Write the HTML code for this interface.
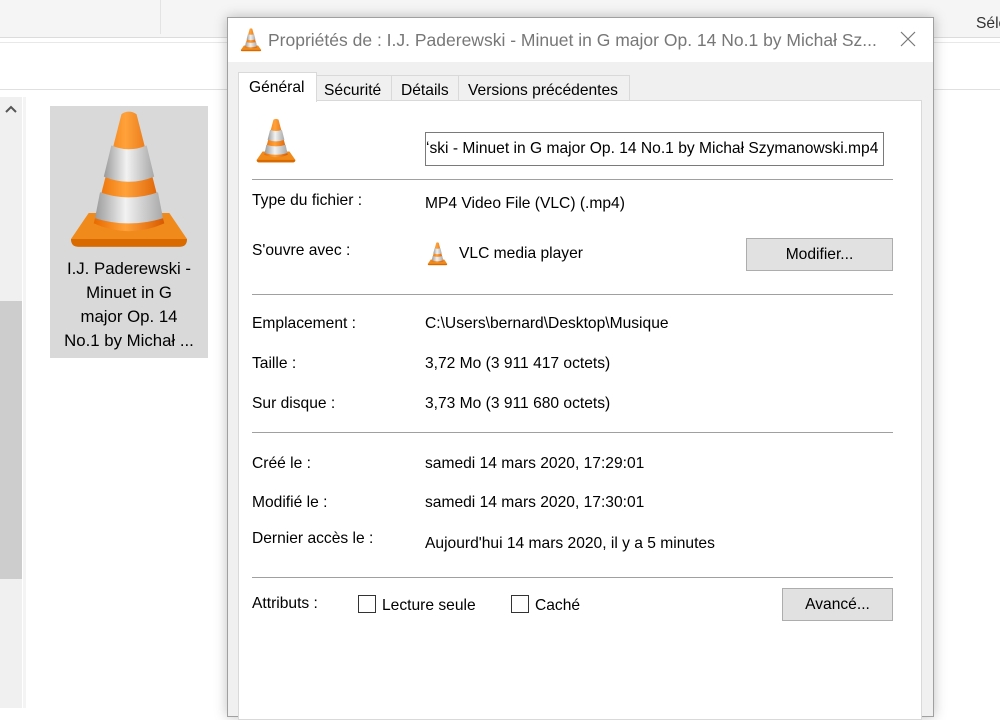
<!DOCTYPE html>
<html><head><meta charset="utf-8"><style>
*{margin:0;padding:0;box-sizing:border-box}
body{width:1000px;height:708px;overflow:hidden;background:#fff;font-family:"Liberation Sans",sans-serif;position:relative;color:#000}
.a{position:absolute}
.t{position:absolute;font-size:15.6px;white-space:nowrap;line-height:18px}
.sep{position:absolute;left:252px;width:641px;height:1px;background:#a0a0a0}
.btn{position:absolute;background:#e1e1e1;border:1px solid #adadad;font-size:15.6px;text-align:center}
.cb{position:absolute;width:18px;height:18px;border:1px solid #333;background:#fff}
</style></head><body>
<svg width="0" height="0" style="position:absolute"><defs>
<linearGradient id="og" x1="0" x2="1"><stop offset="0" stop-color="#e86a00"/><stop offset=".45" stop-color="#ffa23a"/><stop offset="1" stop-color="#d85a00"/></linearGradient>
<linearGradient id="wg" x1="0" x2="1"><stop offset="0" stop-color="#9a9a9a"/><stop offset=".45" stop-color="#f2f2f2"/><stop offset="1" stop-color="#a8a8a8"/></linearGradient>
<symbol id="cone" viewBox="0 0 100 110" preserveAspectRatio="none">
<path d="M4 100 L18 80 L82 80 L96 100 Q96 106 90 106 L10 106 Q4 106 4 100Z" fill="#f08a1a"/>
<path d="M4 100 L96 100 Q96 106 90 106 L10 106 Q4 106 4 100Z" fill="#d96a00"/>
<path d="M44 4 Q50 0 56 4 L78 88 Q50 100 22 88Z" fill="url(#og)"/>
<path d="M36 28 Q50 34 64 28 L70 52 Q50 60 30 52Z" fill="url(#wg)"/>
<path d="M27 64 Q50 72 73 64 L77 84 Q50 92 23 84Z" fill="url(#wg)"/>
</symbol></defs></svg>

<div class="a" style="left:0;top:0;width:1000px;height:37px;background:#f5f5f5"></div>
<div class="a" style="left:160px;top:0;width:1px;height:34px;background:#e3e3e3"></div>
<div class="a" style="left:0;top:37px;width:1000px;height:1px;background:#dcdcdc"></div>
<div class="a" style="left:0;top:42px;width:1000px;height:1px;background:#e8e8e8"></div>
<div class="a" style="left:0;top:89px;width:1000px;height:1px;background:#e0e0e0"></div>
<div class="t" style="left:976px;top:15px;color:#333">Séle</div>
<div class="a" style="left:0;top:97px;width:22px;height:611px;background:#f0f0f0"></div>
<div class="a" style="left:0;top:301px;width:22px;height:278px;background:#cdcdcd"></div>
<svg class="a" style="left:5px;top:104px" width="12" height="10"><path d="M1 8 L6 3 L11 8" stroke="#555" stroke-width="2" fill="none"/></svg>
<div class="a" style="left:23px;top:97px;width:3px;height:611px;background:#f4f4f4"></div>
<div class="a" style="left:50px;top:106px;width:158px;height:252px;background:#d9d9d9"></div>
<svg class="a" style="left:66px;top:109px" width="126" height="143"><use href="#cone"/></svg>
<div class="a" style="left:50px;top:257px;width:158px;text-align:center;font-size:16.8px;line-height:24px;color:#000">I.J. Paderewski -<br>Minuet in G<br>major Op. 14<br>No.1 by Michał ...</div>

<div class="a" style="left:227px;top:17px;width:707px;height:700px;background:#f0f0f0;border:1px solid #a0a0a0;box-shadow:0 0 12px rgba(0,0,0,.25)"></div>
<div class="a" style="left:228px;top:18px;width:705px;height:44px;background:#fff"></div>
<svg class="a" style="left:240px;top:28px" width="22" height="24"><use href="#cone"/></svg>
<div class="t" style="left:268px;top:31px;font-size:17.5px;color:#777">Propriétés de : I.J. Paderewski - Minuet in G major Op. 14 No.1 by Michał Sz...</div>
<svg class="a" style="left:900px;top:31px" width="16" height="16"><path d="M1 1 L15 15 M15 1 L1 15" stroke="#777" stroke-width="1.2"/></svg>

<div class="a" style="left:238px;top:100px;width:684px;height:620px;background:#fff;border:1px solid #d9d9d9"></div>
<div class="a" style="left:316px;top:75px;width:76px;height:26px;border:1px solid #d9d9d9;background:#f0f0f0"></div>
<div class="a" style="left:391px;top:75px;width:68px;height:26px;border:1px solid #d9d9d9;background:#f0f0f0"></div>
<div class="a" style="left:458px;top:75px;width:172px;height:26px;border:1px solid #d9d9d9;background:#f0f0f0"></div>
<div class="a" style="left:238px;top:72px;width:79px;height:30px;border:1px solid #d9d9d9;border-bottom:none;background:#fff"></div>
<div class="t" style="left:249px;top:79px">Général</div>
<div class="t" style="left:324px;top:82px">Sécurité</div>
<div class="t" style="left:401px;top:82px">Détails</div>
<div class="t" style="left:468px;top:82px">Versions précédentes</div>

<svg class="a" style="left:255px;top:118px" width="42" height="46"><use href="#cone"/></svg>
<div class="a" style="left:425px;top:132px;width:459px;height:34px;border:1px solid #7a7a7a;background:#fff;overflow:hidden"></div>
<div class="t" style="left:426px;top:140px">ʻski - Minuet in G major Op. 14 No.1 by Michał Szymanowski.mp4</div>
<div class="sep" style="top:179px"></div>

<div class="t" style="left:252px;top:192px">Type du fichier :</div>
<div class="t" style="left:425px;top:195px">MP4 Video File (VLC) (.mp4)</div>
<div class="t" style="left:252px;top:242px">S'ouvre avec :</div>
<svg class="a" style="left:427px;top:242px" width="21" height="24"><use href="#cone"/></svg>
<div class="t" style="left:459px;top:245px">VLC media player</div>
<div class="btn" style="left:746px;top:238px;width:147px;height:33px;line-height:31px">Modifier...</div>
<div class="sep" style="top:294px"></div>

<div class="t" style="left:252px;top:315px">Emplacement :</div>
<div class="t" style="left:425px;top:315px">C:\Users\bernard\Desktop\Musique</div>
<div class="t" style="left:252px;top:355px">Taille :</div>
<div class="t" style="left:425px;top:355px">3,72 Mo (3 911 417 octets)</div>
<div class="t" style="left:252px;top:395px">Sur disque :</div>
<div class="t" style="left:425px;top:395px">3,73 Mo (3 911 680 octets)</div>
<div class="sep" style="top:432px"></div>

<div class="t" style="left:252px;top:455px">Créé le :</div>
<div class="t" style="left:425px;top:455px">samedi 14 mars 2020, 17:29:01</div>
<div class="t" style="left:252px;top:494px">Modifié le :</div>
<div class="t" style="left:425px;top:494px">samedi 14 mars 2020, 17:30:01</div>
<div class="t" style="left:252px;top:530px">Dernier accès le :</div>
<div class="t" style="left:425px;top:535px">Aujourd'hui 14 mars 2020, il y a 5 minutes</div>
<div class="sep" style="top:577px"></div>

<div class="t" style="left:252px;top:595px">Attributs :</div>
<div class="cb" style="left:358px;top:595px"></div>
<div class="t" style="left:382px;top:597px">Lecture seule</div>
<div class="cb" style="left:511px;top:595px"></div>
<div class="t" style="left:535px;top:597px">Caché</div>
<div class="btn" style="left:782px;top:588px;width:111px;height:33px;line-height:31px">Avancé...</div>
</body></html>
